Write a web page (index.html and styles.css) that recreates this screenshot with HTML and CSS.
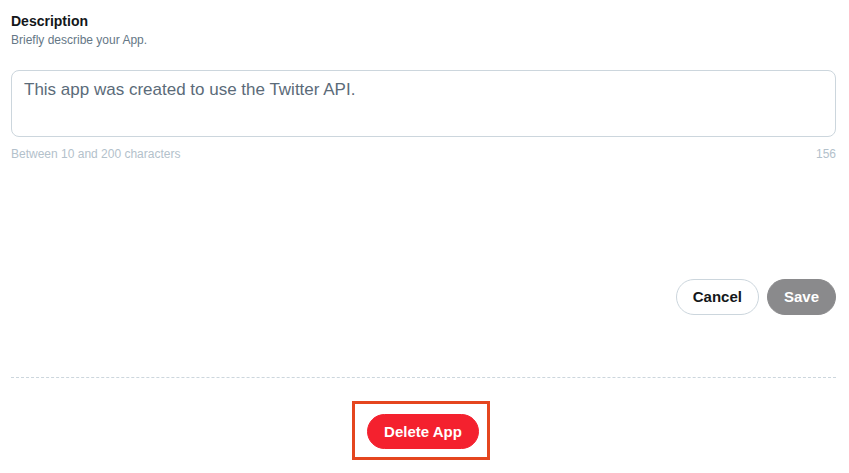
FILE: index.html
```html
<!DOCTYPE html>
<html>
<head>
<meta charset="utf-8">
<link rel="stylesheet" href="styles.css">
</head>
<body>
<div class="page">
  <div class="field">
    <div class="label">Description</div>
    <div class="hint">Briefly describe your App.</div>
    <div class="textarea">This app was created to use the Twitter API.</div>
    <div class="meta">
      <span>Between 10 and 200 characters</span>
      <span>156</span>
    </div>
  </div>
  <div class="actions">
    <button class="btn btn-cancel">Cancel</button>
    <button class="btn btn-save">Save</button>
  </div>
  <div class="divider"></div>
  <div class="danger">
    <div class="highlight">
      <button class="btn btn-delete">Delete App</button>
    </div>
  </div>
</div>
</body>
</html>
```

FILE: styles.css
```css
* { box-sizing: border-box; }
html, body { margin: 0; padding: 0; background: #fff; }
body { font-family: "Liberation Sans", Arial, sans-serif; color: #14171a; }
.page { padding: 12px 13px 0 11px; }
.label { font-size: 14px; font-weight: 700; line-height: 18px; color: #14171a; }
.hint { font-size: 12px; line-height: 14px; color: #657786; margin-top: 3px; }
.textarea {
  margin-top: 23px;
  height: 67px;
  border: 1px solid #ccd6dd;
  border-radius: 8px;
  padding: 9px 12px;
  font-size: 17px;
  line-height: 20px;
  color: #5b6b79;
}
.meta {
  display: flex;
  justify-content: space-between;
  font-size: 12px;
  line-height: 14px;
  color: #b3c1cb;
  margin-top: 10px;
}
.actions { display: flex; justify-content: flex-end; gap: 8px; margin-top: 118px; }
.btn {
  font-family: "Liberation Sans", Arial, sans-serif;
  font-weight: 700;
  font-size: 15px;
  height: 36px;
  border-radius: 18px;
  padding: 0 16px;
  border: 1px solid transparent;
  line-height: 34px;
  cursor: pointer;
}
.btn-cancel { background: #fff; border-color: #ccd6dd; color: #14171a; }
.btn-save { background: #8a8a8c; border-color: #8a8a8c; color: #fff; }
.divider { margin-top: 62px; border-top: 1px dashed #ccd6dd; }
.danger { display: flex; justify-content: center; margin-top: 23px; padding-right: 5px; }
.highlight { border: 3px solid #e5461f; padding: 10px 8px 8px 12px; }
.btn-delete { background: #f4212e; border-color: #f4212e; color: #fff; height: 35px; width: 112px; padding: 0; display: block; }
```
